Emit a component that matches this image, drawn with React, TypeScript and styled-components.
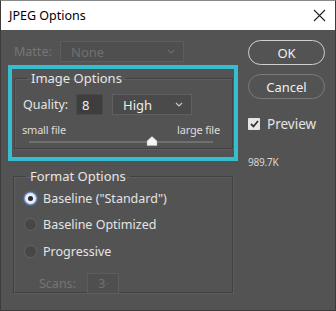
import styled, { createGlobalStyle } from 'styled-components';

const GlobalStyle = createGlobalStyle`
  html, body {
    margin: 0;
    padding: 0;
    background: #535353;
  }
  * {
    box-sizing: border-box;
  }
`;

const uiFont = `"Noto Sans", "Open Sans", sans-serif`;

const Window = styled.div`
  width: 336px;
  height: 311px;
  display: flex;
  flex-direction: column;
  border: 1px solid #3c3c3c;
  border-top-color: #8a8a8a;
  font-family: ${uiFont};
  overflow: hidden;
`;

const TitleBar = styled.div`
  height: 29px;
  flex: none;
  background: #ffffff;
  display: flex;
  align-items: center;
  justify-content: space-between;
  padding: 0 9px 0 8px;
  color: #000;
  font-size: 12.5px;
`;

const CloseIcon = styled.svg`
  width: 13px;
  height: 13px;
`;

const Body = styled.div`
  flex: 1;
  background: #535353;
  display: flex;
  padding-left: 7px;
  color: #e4e4e4;
  font-size: 12.5px;
`;

const LeftColumn = styled.div`
  width: 230px;
  display: flex;
  flex-direction: column;
`;

const RightColumn = styled.div`
  width: 77px;
  margin-left: 10px;
  padding-top: 10px;
  display: flex;
  flex-direction: column;
`;

const Row = styled.div<{ $indent?: number; $height?: number }>`
  display: flex;
  align-items: center;
  padding-left: ${p => p.$indent ?? 0}px;
  height: ${p => p.$height ?? 21}px;
`;

const Label = styled.span<{ $width?: number; $disabled?: boolean }>`
  width: ${p => (p.$width ? `${p.$width}px` : 'auto')};
  flex: none;
  color: ${p => (p.$disabled ? '#757575' : '#e4e4e4')};
  white-space: nowrap;
`;

const MatteRow = styled(Row)`
  margin-top: 11px;
`;

const Select = styled.div<{ $width: number; $disabled?: boolean }>`
  width: ${p => p.$width}px;
  height: 21px;
  display: flex;
  align-items: center;
  justify-content: space-between;
  padding: 0 8px 0 10px;
  border: 1px solid ${p => (p.$disabled ? '#5d5d5d' : '#5f5f5f')};
  background: ${p => (p.$disabled ? '#4f4f4f' : '#4a4a4a')};
  color: ${p => (p.$disabled ? '#6f6f6f' : '#ececec')};
  font-size: 13px;
`;

const Chevron = styled.svg<{ $disabled?: boolean }>`
  width: 8px;
  height: 5px;
  stroke: ${p => (p.$disabled ? '#6a6a6a' : '#c8c8c8')};
`;

const NumberBox = styled.div`
  width: 27px;
  height: 21px;
  display: flex;
  align-items: center;
  padding-left: 5px;
  background: #3e3e3e;
  border: 1px solid #4a4a4a;
  color: #f0f0f0;
  font-size: 13px;
`;

const Highlight = styled.div`
  margin-top: 3px;
  height: 96px;
  border: 4px solid #36bdd0;
  padding: 2px 1px 0 2px;
`;

const GroupBox = styled.fieldset<{ $height: number }>`
  margin: 0;
  height: ${p => p.$height}px;
  border: 1px solid #414141;
  box-shadow: 1px 1px 0 #5e5e5e, inset 1px 1px 0 #5e5e5e;
  padding: 0;
  min-width: 0;
`;

const Legend = styled.legend`
  margin-left: 12px;
  padding: 0 4px;
  font-size: 13px;
  line-height: 14px;
  color: #e6e6e6;
`;

const QualityRow = styled(Row)`
  margin-top: 9px;
  padding-left: 8px;
`;

const SliderLabels = styled.div`
  display: flex;
  justify-content: space-between;
  padding: 0 12px 0 7px;
  margin-top: 7px;
  font-size: 11px;
  color: #dcdcdc;
  letter-spacing: -0.2px;
`;

const SliderTrack = styled.div`
  position: relative;
  margin: 4px 19px 0 14px;
  height: 2px;
  background: #6f6f6f;
`;

const SliderThumb = styled.svg`
  position: absolute;
  top: -5px;
  width: 11px;
  height: 10px;
  transform: translateX(-50%);
`;

const FormatGroup = styled(GroupBox)`
  margin: 8px 0 0 5px;
  width: 220px;
  padding-top: 2px;
`;

const RadioRow = styled(Row)`
  padding-left: 10px;
  height: 26.5px;
  gap: 6px;
`;

const Radio = styled.span<{ $checked?: boolean }>`
  width: 13px;
  height: 13px;
  border-radius: 50%;
  flex: none;
  display: flex;
  align-items: center;
  justify-content: center;
  background: ${p => (p.$checked ? '#e8ecf4' : '#474747')};
  border: 1px solid ${p => (p.$checked ? '#6e8fd0' : '#626262')};
  box-shadow: ${p => (p.$checked ? '0 0 2px #7a9ad8' : 'none')};
  &::after {
    content: '';
    display: ${p => (p.$checked ? 'block' : 'none')};
    width: 5px;
    height: 5px;
    border-radius: 50%;
    background: #2a2a2a;
  }
`;

const ScansRow = styled(Row)`
  margin-top: 8px;
  padding-left: 25px;
`;

const PillButton = styled.button<{ $primary?: boolean }>`
  width: 77px;
  height: 25px;
  margin-bottom: 9px;
  border-radius: 13px;
  background: transparent;
  border: 1.5px solid ${p => (p.$primary ? '#d0d0d0' : '#7a7a7a')};
  color: #f0f0f0;
  font-family: ${uiFont};
  font-size: 13px;
  padding: 0;
`;

const CheckRow = styled(Row)`
  margin-top: 5px;
  gap: 7px;
  font-size: 13.5px;
`;

const CheckBox = styled.span`
  width: 12px;
  height: 12px;
  flex: none;
  background: #e6e6e6;
  border-radius: 1px;
  display: flex;
  align-items: center;
  justify-content: center;
`;

const FileSize = styled.div`
  margin-top: 21px;
  font-size: 10px;
  color: #d6d6d6;
  letter-spacing: -0.2px;
`;

function DownChevron({ disabled }: { disabled?: boolean }) {
  return (
    <Chevron $disabled={disabled} viewBox="0 0 8 5" fill="none" strokeWidth="1.2">
      <path d="M1 1l3 3 3-3" />
    </Chevron>
  );
}

const App = () => {
  const quality = 8;
  const thumbPos = 67;

  return (
    <>
      <GlobalStyle />
      <Window>
        <TitleBar>
          <span>JPEG Options</span>
          <CloseIcon viewBox="0 0 13 13" stroke="#222" strokeWidth="1.1" fill="none">
            <path d="M1 1l11 11M12 1L1 12" />
          </CloseIcon>
        </TitleBar>
        <Body>
          <LeftColumn>
            <MatteRow $indent={6}>
              <Label $width={46} $disabled>Matte:</Label>
              <Select $width={124} $disabled>
                <span>None</span>
                <DownChevron disabled />
              </Select>
            </MatteRow>

            <Highlight>
              <GroupBox $height={78}>
                <Legend>Image Options</Legend>
                <QualityRow>
                  <Label $width={53}>Quality:</Label>
                  <NumberBox>{quality}</NumberBox>
                  <Select $width={80} style={{ marginLeft: 9 }}>
                    <span>High</span>
                    <DownChevron />
                  </Select>
                </QualityRow>
                <SliderLabels>
                  <span>small file</span>
                  <span>large file</span>
                </SliderLabels>
                <SliderTrack>
                  <SliderThumb viewBox="0 0 11 10" style={{ left: `${thumbPos}%` }}>
                    <path d="M5.5 0.5L10.5 5v4.5H0.5V5z" fill="#f4f4f4" stroke="#bdbdbd" strokeWidth="0.6" />
                  </SliderThumb>
                </SliderTrack>
              </GroupBox>
            </Highlight>

            <FormatGroup $height={124}>
              <Legend>Format Options</Legend>
              <RadioRow>
                <Radio $checked />
                <Label>Baseline (&quot;Standard&quot;)</Label>
              </RadioRow>
              <RadioRow>
                <Radio />
                <Label>Baseline Optimized</Label>
              </RadioRow>
              <RadioRow>
                <Radio />
                <Label>Progressive</Label>
              </RadioRow>
              <ScansRow>
                <Label $width={48} $disabled>Scans:</Label>
                <Select $width={32} $disabled>
                  <span>3</span>
                  <DownChevron disabled />
                </Select>
              </ScansRow>
            </FormatGroup>
          </LeftColumn>

          <RightColumn>
            <PillButton $primary>OK</PillButton>
            <PillButton>Cancel</PillButton>
            <CheckRow>
              <CheckBox>
                <svg width="9" height="8" viewBox="0 0 9 8" fill="none" stroke="#333" strokeWidth="1.8">
                  <path d="M1 4l2.5 2.5L8 1" />
                </svg>
              </CheckBox>
              <span>Preview</span>
            </CheckRow>
            <FileSize>989.7K</FileSize>
          </RightColumn>
        </Body>
      </Window>
    </>
  );
};

export default App;
